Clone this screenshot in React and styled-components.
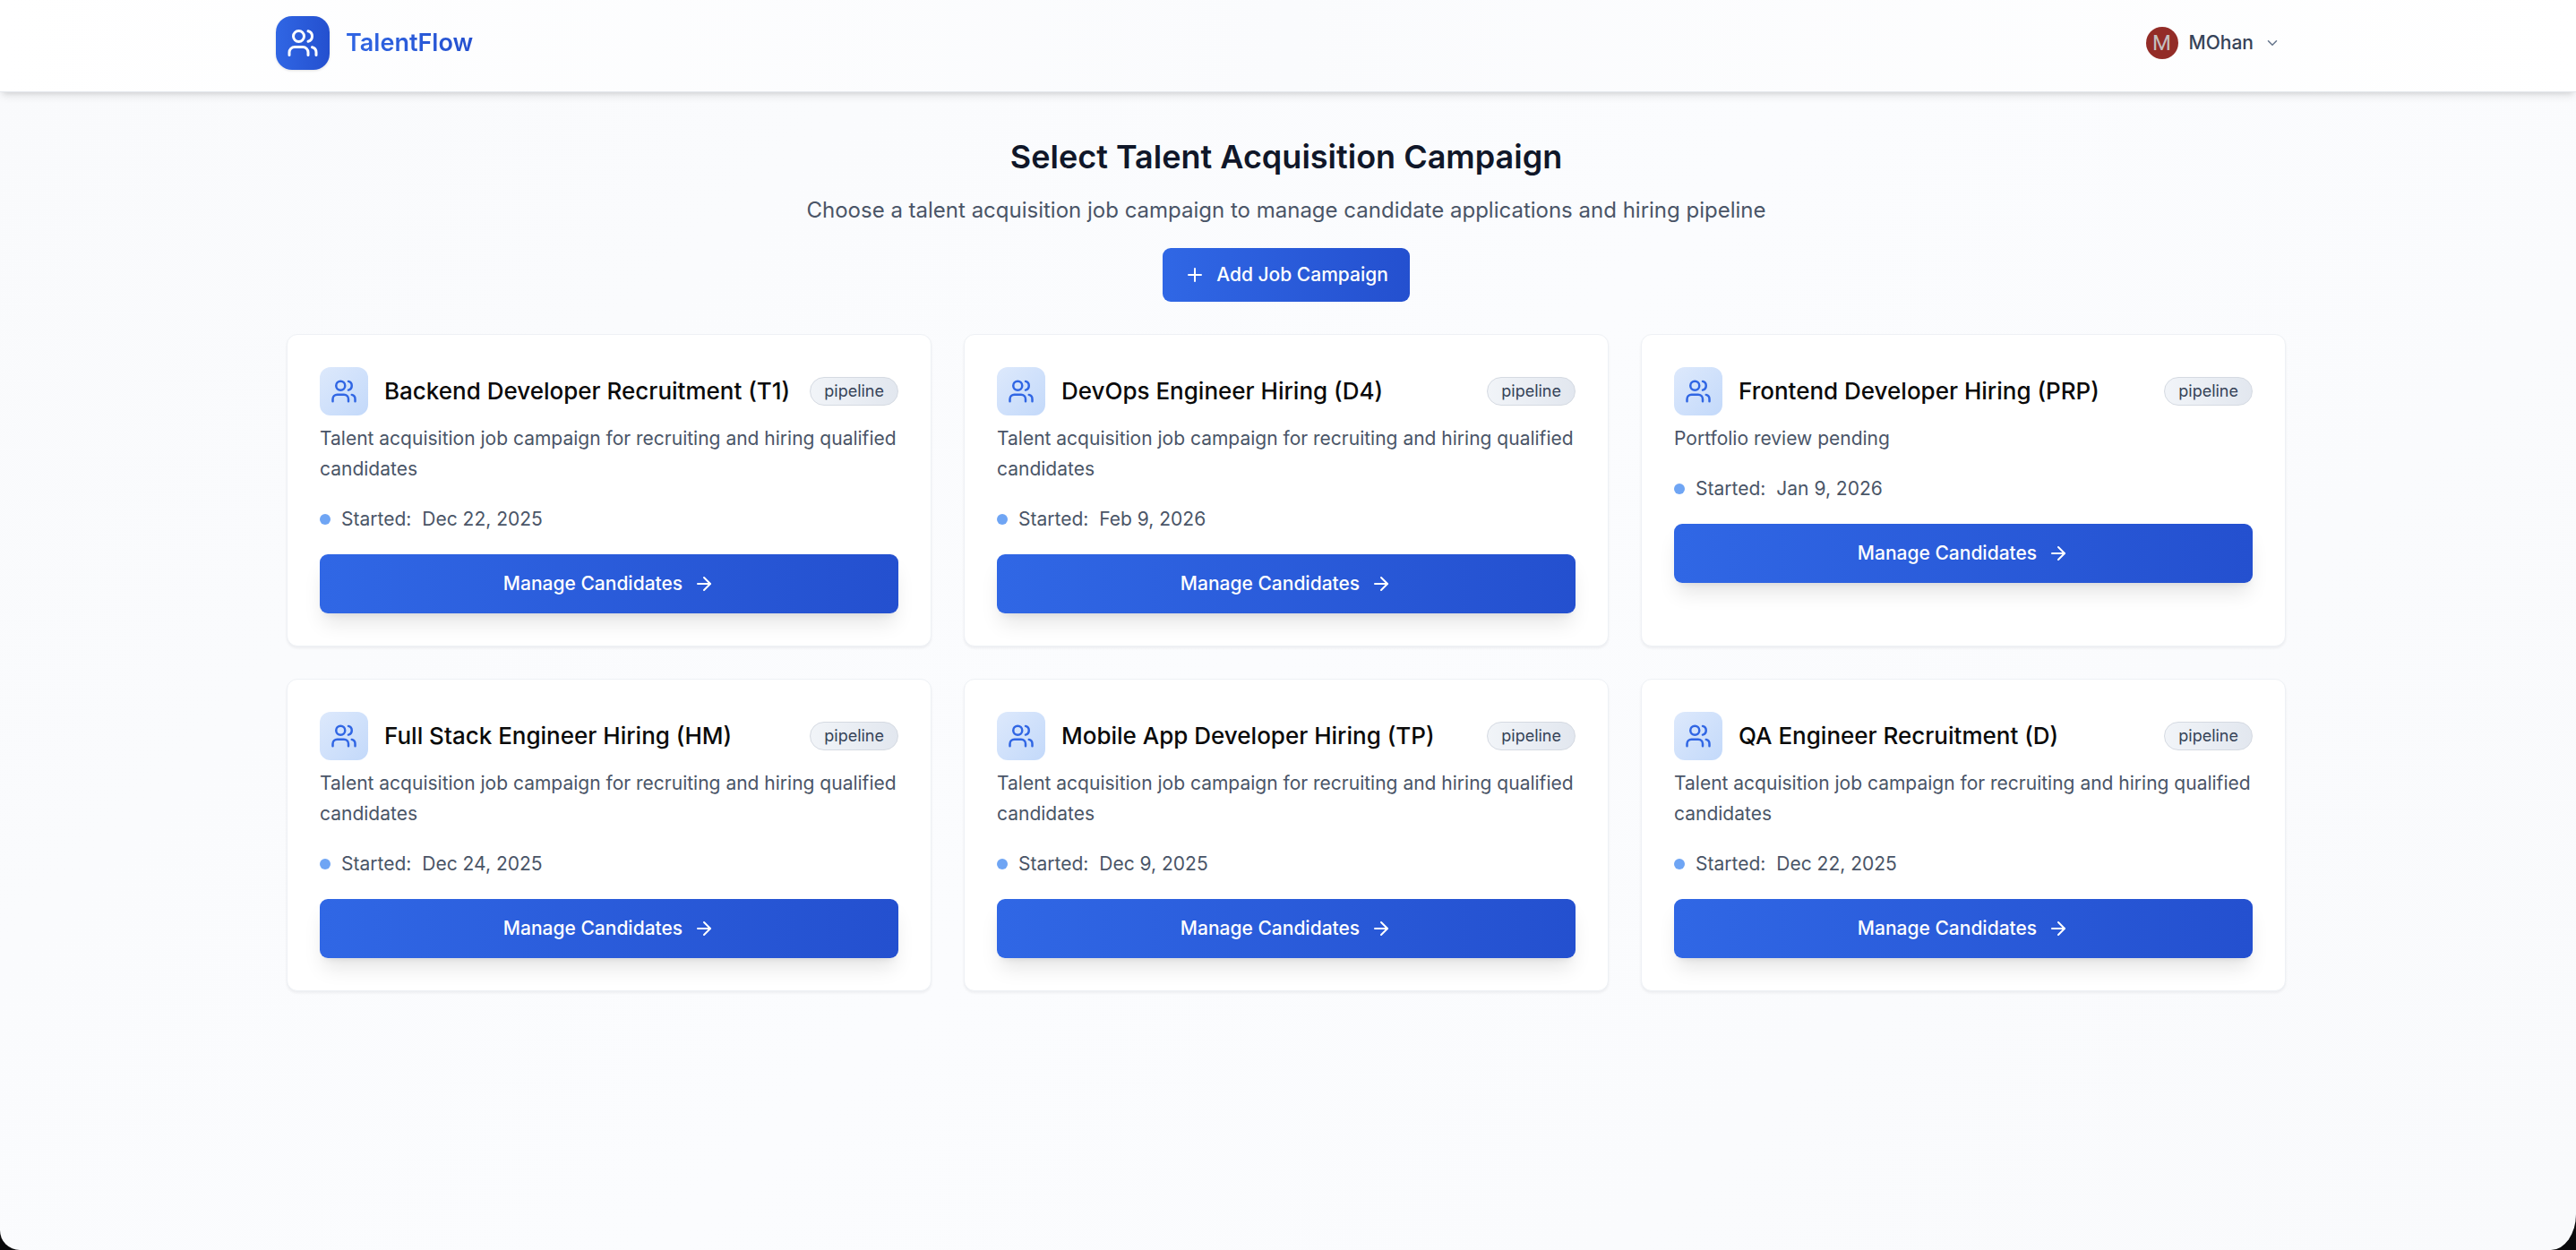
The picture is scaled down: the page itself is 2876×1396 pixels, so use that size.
import React from "react";
import styled, { createGlobalStyle } from "styled-components";
import { ArrowRight, ChevronDown, Plus, Users } from "lucide-react";

const GlobalStyle = createGlobalStyle`
  *, *::before, *::after { box-sizing: border-box; }
  html { background: #0a0a0c; }
  body {
    margin: 0;
    font-family: Inter, "Liberation Sans", sans-serif;
    color: #0a0a0a;
    -webkit-font-smoothing: antialiased;
  }
  h1, h2, p, ul, dl, dd { margin: 0; padding: 0; }
  button { font: inherit; cursor: pointer; border: 0; }
`;

const brandGradient = "linear-gradient(to right, #3066e4, #2450cf)";
const buttonGradient = "linear-gradient(to right, #3067e5, #2450cf)";

const Page = styled.div`
  min-height: 100vh;
  padding-bottom: 36px;
  overflow: hidden;
  border-radius: 0 0 28px 22px / 0 0 40px 22px;
  background: linear-gradient(135deg, #f9fafc, #fbfcfe 50%, #f9fafc);
`;

const Header = styled.header`
  border-bottom: 1px solid #e4e7ec;
  padding-right: 4px;
  background: linear-gradient(to right, #ffffff, #fafbfd 50%, #ffffff);
  box-shadow: 0 6px 9px -2px rgba(0, 0, 0, 0.1), 0 3px 6px -3px rgba(0, 0, 0, 0.1);
`;

const HeaderInner = styled.div`
  max-width: 2304px;
  margin: 0 auto;
  padding: 18px 24px 24px;
  display: flex;
  align-items: center;
  justify-content: space-between;
`;

const Brand = styled.a`
  display: flex;
  align-items: center;
  gap: 18px;
  text-decoration: none;
`;

const BrandMark = styled.span`
  display: grid;
  place-items: center;
  width: 60px;
  height: 60px;
  border-radius: 18px;
  color: #ffffff;
  background: ${brandGradient};
  box-shadow: 0 1px 3px rgba(0, 0, 0, 0.12);
`;

const BrandName = styled.span`
  font-size: 27px;
  line-height: 42px;
  font-weight: 600;
  color: transparent;
  background: ${brandGradient};
  background-clip: text;
`;

const AccountButton = styled.button`
  display: flex;
  align-items: center;
  gap: 12px;
  padding: 12px 18px;
  background: transparent;
  font-size: 21px;
  line-height: 30px;
  font-weight: 500;
  color: #364358;
  svg { color: #64748b; }
`;

const Avatar = styled.span`
  display: grid;
  place-items: center;
  width: 36px;
  height: 36px;
  border-radius: 50%;
  background: #932c27;
  color: #c4bfbf;
  font-family: Roboto, sans-serif;
  font-size: 24px;
  font-weight: 400;
`;

const Main = styled.main`
  padding-right: 4px;
`;

const MainInner = styled.div`
  max-width: 2304px;
  margin: 0 auto;
  padding: 48px 36px 0;
  display: flex;
  flex-direction: column;
  gap: 36px;
`;

const Intro = styled.section`
  display: flex;
  flex-direction: column;
  align-items: center;
  text-align: center;
`;

const PageTitle = styled.h1`
  font-size: 36px;
  line-height: 48px;
  font-weight: 600;
  color: #101729;
`;

const Lead = styled.p`
  margin: 18px 0 24px;
  font-size: 24px;
  line-height: 36px;
  color: #4a5567;
`;

const PrimaryButton = styled.button`
  display: flex;
  align-items: center;
  justify-content: center;
  gap: 12px;
  width: ${(p) => (p.$wide ? "100%" : "auto")};
  height: ${(p) => (p.$wide ? "66px" : "60px")};
  padding: 0 24px;
  border-radius: 9px;
  font-size: 21px;
  line-height: 30px;
  font-weight: 500;
  color: #ffffff;
  background: ${buttonGradient};
  box-shadow: ${(p) =>
    p.$wide
      ? "0 15px 22px -4px rgba(0, 0, 0, 0.1), 0 6px 9px -6px rgba(0, 0, 0, 0.1)"
      : "none"};
`;

const CampaignGrid = styled.ul`
  list-style: none;
  display: grid;
  grid-template-columns: repeat(3, minmax(0, 1fr));
  gap: 36px;
`;

const Card = styled.li`
  padding: 36px;
  border: 1px solid #eef1f5;
  border-radius: 12px;
  background: #ffffff;
  box-shadow: 0 2px 3px rgba(15, 23, 42, 0.06);
`;

const CardHeader = styled.div`
  display: flex;
  align-items: center;
  gap: 18px;
`;

const CardIcon = styled.span`
  display: grid;
  place-items: center;
  flex: none;
  width: 54px;
  height: 54px;
  border-radius: 12px;
  color: #3066e4;
  background: linear-gradient(135deg, #dde9fc, #c3d9fa);
`;

const CardTitle = styled.h2`
  flex: 1;
  min-width: 0;
  white-space: nowrap;
  font-size: 26px;
  line-height: 36px;
  font-weight: 500;
`;

const Badge = styled.span`
  padding: 3px 15px;
  border: 1px solid #d5dae2;
  border-radius: 16px;
  font-size: 18px;
  line-height: 24px;
  color: #364358;
  background: linear-gradient(to right, #f1f4f8, #e2e7ef);
`;

const Description = styled.p`
  margin: 9px 0 24px;
  font-size: 21px;
  line-height: 34px;
  color: #4a5567;
`;

const StartDate = styled.dl`
  display: flex;
  align-items: center;
  gap: 12px;
  margin: 0 0 24px;
  font-size: 21px;
  line-height: 30px;
  color: #4a5567;
  &::before {
    content: "";
    width: 12px;
    height: 12px;
    border-radius: 50%;
    background: #6fa5f4;
  }
`;

const defaultDescription =
  "Talent acquisition job campaign for recruiting and hiring qualified candidates";

const campaigns = [
  { title: "Backend Developer Recruitment (T1)", started: "Dec 22, 2025" },
  { title: "DevOps Engineer Hiring (D4)", started: "Feb 9, 2026" },
  {
    title: "Frontend Developer Hiring (PRP)",
    started: "Jan 9, 2026",
    description: "Portfolio review pending",
  },
  { title: "Full Stack Engineer Hiring (HM)", started: "Dec 24, 2025" },
  { title: "Mobile App Developer Hiring (TP)", started: "Dec 9, 2025" },
  { title: "QA Engineer Recruitment (D)", started: "Dec 22, 2025" },
];

function CampaignCard({ title, started, description = defaultDescription }) {
  return (
    <Card>
      <CardHeader>
        <CardIcon>
          <Users size={30} />
        </CardIcon>
        <CardTitle>{title}</CardTitle>
        <Badge>pipeline</Badge>
      </CardHeader>
      <Description>{description}</Description>
      <StartDate>
        <dt>Started:</dt>
        <dd>{started}</dd>
      </StartDate>
      <PrimaryButton type="button" $wide>
        Manage Candidates
        <ArrowRight size={24} />
      </PrimaryButton>
    </Card>
  );
}

export default function App() {
  return (
    <>
      <GlobalStyle />
      <Page>
        <Header>
          <HeaderInner>
            <Brand href="#">
              <BrandMark>
                <Users size={36} />
              </BrandMark>
              <BrandName>TalentFlow</BrandName>
            </Brand>
            <AccountButton type="button">
              <Avatar>M</Avatar>
              MOhan
              <ChevronDown size={18} />
            </AccountButton>
          </HeaderInner>
        </Header>
        <Main>
          <MainInner>
            <Intro>
              <PageTitle>Select Talent Acquisition Campaign</PageTitle>
              <Lead>
                Choose a talent acquisition job campaign to manage candidate
                applications and hiring pipeline
              </Lead>
              <PrimaryButton type="button">
                <Plus size={24} />
                Add Job Campaign
              </PrimaryButton>
            </Intro>
            <CampaignGrid>
              {campaigns.map((campaign) => (
                <CampaignCard key={campaign.title} {...campaign} />
              ))}
            </CampaignGrid>
          </MainInner>
        </Main>
      </Page>
    </>
  );
}
